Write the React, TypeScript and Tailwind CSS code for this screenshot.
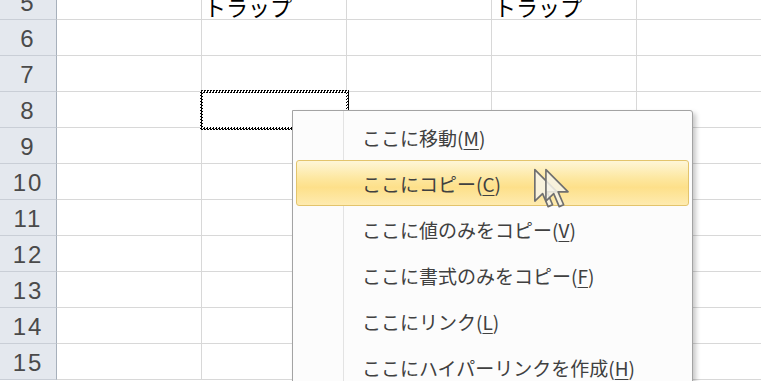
const rows = [5, 6, 7, 8, 9, 10, 11, 12, 13, 14, 15];

const menuItems: { label: string; key: string; active?: boolean }[] = [
  { label: "ここに移動", key: "M" },
  { label: "ここにコピー", key: "C", active: true },
  { label: "ここに値のみをコピー", key: "V" },
  { label: "ここに書式のみをコピー", key: "F" },
  { label: "ここにリンク", key: "L" },
  { label: "ここにハイパーリンクを作成", key: "H" },
];

function Row({ num }: { num: number }) {
  const label = num === 5 ? "トラップ" : "";
  return (
    <div className="flex h-[36px]">
      <div className="flex w-[57px] shrink-0 items-center justify-center border-r border-b border-r-[#a7b0bb] border-b-[#c9ced6] bg-[#e4e8ee] pt-[2px] font-['Liberation_Sans',sans-serif] text-[24px] leading-none tracking-[2px] text-[#4a4a4a]">
        {num}
      </div>
      {[0, 1, 2, 3, 4].map((c) => (
        <div
          key={c}
          className="flex w-[145px] shrink-0 items-end border-r border-b border-[#d8d8d8] pb-[2px] pl-[2px] text-[22px] leading-none text-black"
        >
          {c === 1 || c === 3 ? label : ""}
        </div>
      ))}
    </div>
  );
}

function DragCursor() {
  const arrow = "M0 0 L0 17 L4.2 13 L7.2 20 L9.6 19 L6.6 12 L12 12 Z";
  return (
    <svg width="48" height="46" viewBox="0 0 26 24" className="block">
      <g transform="translate(1 1)" fill="#f7f4ea" fillOpacity="0.85" stroke="#6f6f6f" strokeWidth="0.9" strokeLinejoin="round">
        <path d={arrow} />
        <path d={arrow} transform="translate(6 0)" />
      </g>
    </svg>
  );
}

export default function App() {
  return (
    <div className="relative h-[381px] w-[761px] overflow-hidden bg-white font-['Noto_Sans_CJK_JP',sans-serif]">
      <div className="-mt-[16px]">
        {rows.map((r) => (
          <Row key={r} num={r} />
        ))}
      </div>

      {/* copy marquee around C8 */}
      <div className="absolute left-[200px] top-[90px] h-[40px] w-[149px] bg-[repeating-conic-gradient(#000_0_25%,#fff_0_50%)] bg-[length:3px_3px] p-[3px]">
        <div className="h-full w-full bg-white" />
      </div>

      {/* context menu */}
      <div className="absolute left-[292px] top-[110px] h-[290px] w-[401px] rounded-tr-[3px] border border-[#a3a3a3] bg-[#fcfcfc] bg-[linear-gradient(to_right,transparent_50px,#e3e3e3_50px,#e3e3e3_51px,transparent_51px)] pt-[3px] shadow-[3px_3px_5px_rgba(0,0,0,0.22)]">
        {menuItems.map((item) => (
          <div
            key={item.key}
            className={
              item.active
                ? "mx-[3px] flex h-[46px] items-center rounded-[3px] border border-[#e3c46c] bg-[linear-gradient(to_bottom,#fef6d8_0%,#fde79f_40%,#fde08a_60%,#feebb0_100%)] pl-[65px] text-[19px] leading-none text-[#404040]"
                : "mx-[3px] flex h-[46px] items-center border border-transparent pl-[65px] text-[19px] leading-none text-[#404040]"
            }
          >
            <span>
              {item.label}(<span className="underline underline-offset-[3px]">{item.key}</span>)
            </span>
            {item.active ? (
              <span className="ml-[32px] mt-[14px]">
                <DragCursor />
              </span>
            ) : null}
          </div>
        ))}
      </div>
    </div>
  );
}
